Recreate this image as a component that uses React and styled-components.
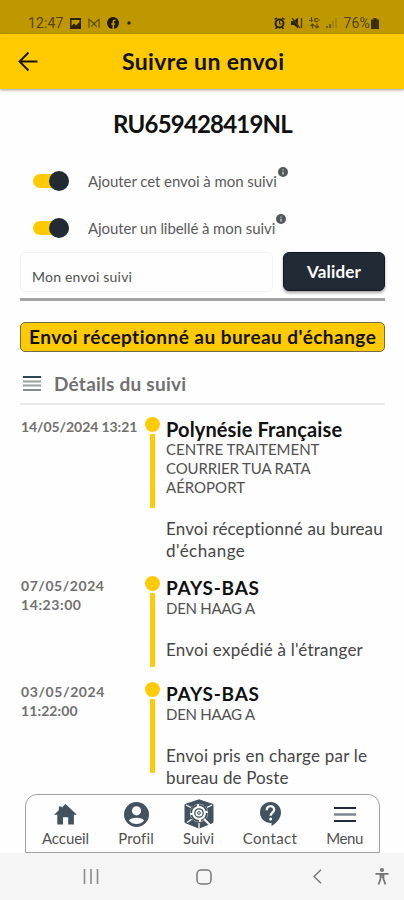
import React from 'react';
import styled, { createGlobalStyle } from 'styled-components';

const Global = createGlobalStyle`
  * { box-sizing: border-box; }
  body { margin: 0; background: #fefefe; font-family: Lato, "Open Sans", sans-serif; }
  svg { display: block; flex: none; }
`;

const Screen = styled.div`
  width: 404px;
  height: 900px;
  display: flex;
  flex-direction: column;
  overflow: hidden;
  background: #fefefe;
  color: #111;
`;

const Text = styled.span`
  white-space: nowrap;
  letter-spacing: ${(p) => p.$ls || 0}px;
`;

const StatusBar = styled.div`
  height: 34px;
  flex: none;
  padding: 12px 25px 0 28px;
  display: flex;
  justify-content: space-between;
  background: #bf9800;
  color: #54440a;
  font: 400 14px/22px Roboto, sans-serif;
`;

const StatusGroup = styled.div`
  display: flex;
  align-items: center;
  gap: ${(p) => p.$gap}px;
`;

const Header = styled.header`
  height: 55px;
  flex: none;
  display: grid;
  grid-template-columns: 122px 1fr;
  align-items: center;
  background: #ffcb00;
  box-shadow: 0 1px 3px rgba(0, 0, 0, 0.4);
  z-index: 1;
`;

const BackButton = styled.div`
  padding-left: 18px;
`;

const Title = styled.h1`
  margin: 0;
  padding-bottom: 2px;
  font-size: 23px;
  line-height: 30px;
  font-weight: 700;
`;

const Content = styled.main`
  height: 705px;
  flex: none;
  padding: 0 19px 0 20px;
`;

const TrackingNumber = styled.h2`
  margin: 21px 0 0;
  text-align: center;
  font-size: 24px;
  line-height: 28px;
  font-weight: 700;
`;

const Toggles = styled.div`
  padding-top: 19px;
  height: 114px;
`;

const ToggleRow = styled.div`
  height: 47px;
  display: flex;
  align-items: center;
  padding-left: 13px;
  color: #5a5a5a;
  font-size: 15px;
`;

const Switch = styled.div`
  width: 36px;
  height: 14px;
  margin-right: 19px;
  display: flex;
  align-items: center;
  justify-content: flex-end;
  background: #ffcb00;
  border-radius: 7px;
`;

const Knob = styled.div`
  width: 20px;
  height: 20px;
  flex: none;
  border-radius: 50%;
  background: #222a34;
`;

const Info = styled.div`
  align-self: flex-start;
  margin: 10px 0 0 1px;
`;

const Form = styled.div`
  display: flex;
  justify-content: space-between;
  height: 49px;
  border-bottom: 3px solid #a3a3a3;
`;

const Field = styled.div`
  width: 253px;
  height: 40px;
  padding: 9px 0 0 11px;
  border: 1px solid #f3f3f3;
  border-radius: 5px;
  display: flex;
  align-items: center;
  font-size: 14px;
  color: #505050;
`;

const Submit = styled.div`
  width: 102px;
  height: 39px;
  padding-bottom: 0;
  display: flex;
  align-items: center;
  justify-content: center;
  border-radius: 6px;
  border: 1px solid #111722;
  background: #222a35;
  box-shadow: 0 2px 3px rgba(0, 0, 0, 0.35);
  color: #fff;
  font-size: 17px;
  font-weight: 700;
`;

const Banner = styled.div`
  height: 30px;
  margin-top: 21px;
  display: flex;
  align-items: center;
  padding: 0 0 1px 8px;
  background: #ffcb00;
  border: 1px solid #756b48;
  border-radius: 5px;
  font-size: 19px;
  font-weight: 700;
`;

const DetailsHeading = styled.div`
  height: 53px;
  padding: 12px 0 0 3px;
  display: flex;
  align-items: center;
  gap: 13px;
  border-bottom: 2px solid #eaeaea;
  color: #707070;
  font-size: 19px;
  font-weight: 700;
`;

const Timeline = styled.div`
  padding-top: 12px;
`;

const Event = styled.article`
  height: ${(p) => p.$h}px;
  display: grid;
  grid-template-columns: 124px 22px 1fr;
`;

const EventDate = styled.div`
  display: flex;
  flex-direction: column;
  padding-left: 1px;
  font-size: 14px;
  line-height: 19px;
  font-weight: 700;
  color: #707070;
`;

const Marker = styled.div`
  width: 16px;
  display: flex;
  flex-direction: column;
  align-items: center;
  gap: 2px;
`;

const Dot = styled.div`
  width: 15px;
  height: 15px;
  border-radius: 50%;
  background: #ffcb05;
`;

const Bar = styled.div`
  width: 5px;
  height: 74px;
  border-radius: 1px;
  background: #ffcb05;
`;

const EventBody = styled.div`
  display: flex;
  flex-direction: column;
`;

const Place = styled.div`
  margin-top: 2px;
  font-size: ${(p) => p.$size}px;
  line-height: 20px;
  font-weight: 700;
`;

const Office = styled.div`
  display: flex;
  flex-direction: column;
  margin-top: 1px;
  font-size: 15px;
  line-height: 19px;
  color: #505050;
`;

const Message = styled.div`
  margin-top: 21px;
  display: flex;
  flex-direction: column;
  font-size: 17px;
  line-height: 21.5px;
  color: #454545;
`;

const Nav = styled.nav`
  width: 355px;
  height: 59px;
  margin-left: 25px;
  flex: none;
  display: grid;
  grid-template-columns: 79px 62px 63px 80px 1fr;
  border: 1px solid #a0a0a0;
  border-radius: 12px 12px 0 0;
  background: #fefefe;
`;

const NavItem = styled.div`
  display: flex;
  flex-direction: column;
  align-items: center;
  padding-top: 4px;
  font-size: 15px;
  line-height: 18px;
  color: #505050;
`;

const IconSlot = styled.div`
  height: 30px;
  display: flex;
  align-items: center;
`;

const SystemBar = styled.div`
  flex: 1;
  display: grid;
  grid-template-columns: 113px 117px 62px 1fr;
  align-items: center;
  padding: 0 0 0 83px;
  background: #f5f5f5;
`;

const SystemItem = styled.div`
  display: flex;
`;

const InfoIcon = () => (
  <svg width="10" height="10" viewBox="0 0 10 10">
    <circle cx="5" cy="5" r="5" fill="#50595c" />
    <path d="M5 2.6v1M5 4.7v2.7" stroke="#b9c0c2" strokeWidth="1.6" />
  </svg>
);

const icons = {
  home: (
    <svg width="23" height="21" viewBox="0 0 24 22" fill="#42525e">
      <path d="M12 0 24 11.2h-3.2V21.5h-6v-7.5H9.4v7.500h-6V11.2H0L5 6.5V2.5h3V3.8z" />
    </svg>
  ),
  profile: (
    <svg width="25" height="25" viewBox="0 0 25 25">
      <circle cx="12.5" cy="12.5" r="12.5" fill="#42525e" />
      <circle cx="12.5" cy="8.8" r="4.6" fill="#fefefe" />
      <path d="M5 18.5C6.8 14.8 18.2 14.8 20 18.5C16.5 23.2 8.5 23.2 5 18.5Z" fill="#fefefe" />
    </svg>
  ),
  tracking: (
    <svg width="30" height="30" viewBox="0 0 30 30" fill="none" stroke="#42525e">
      <path d="M15 0.8 29 5.5V23.5L15 29.2 1 23.500V5.5Z" fill="#42525e" />
      <path d="M2 6 8 9M28 6 22 9M3 23.5 8 20M15 24v6" stroke="#fefefe" strokeWidth="1.3" />
      <circle cx="15" cy="14" r="9.5" fill="#fefefe" />
      <circle cx="15" cy="14" r="7.800" strokeWidth="1.8" strokeDasharray="10 2.2" />
      <circle cx="15" cy="14" r="4.2" strokeWidth="1.3" />
      <circle cx="15" cy="14" r="1.4" strokeWidth="1" />
      <path d="M20 20 27 27" stroke="#fefefe" strokeWidth="2" />
    </svg>
  ),
  contact: (
    <svg width="21" height="24" viewBox="0 0 21 24">
      <path d="M10.5 0C16.5 0 21 4.5 21 10.5C21 16.5 16 21.5 11.5 24V21C5 21.2 0 16.5 0 10.5C0 4.5 4.5 0 10.5 0Z" fill="#42525e" />
      <path d="M6.8 8.2C6.8 3 14.2 3 14.2 7.6C14.2 10.6 10.6 10.7 10.6 13.8" fill="none" stroke="#fefefe" strokeWidth="2.3" />
      <circle cx="10.6" cy="17" r="1.5" fill="#fefefe" />
    </svg>
  ),
  menu: (
    <svg width="22" height="16" viewBox="0 0 22 16">
      <path d="M0 2h22M0 15h22" stroke="#22283f" strokeWidth="2" />
      <path d="M0 8.500h22" stroke="#7b8791" strokeWidth="2.5" />
    </svg>
  ),
};

const events = [
  {
    h: 159, size: 20,
    date: [['14/05/2024 13:21', -0.08]],
    place: ['Polynésie Française', 0.12],
    office: [['CENTRE TRAITEMENT', 0], ['COURRIER TUA RATA', -0.14], ['AÉROPORT', 0]],
    message: [['Envoi réceptionné au bureau', 0.15], ["d'échange", 0.5]],
  },
  {
    h: 106, size: 19,
    date: [['07/05/2024', 0.55], ['14:23:00', 0.58]],
    place: ['PAYS-BAS', 0.74],
    office: [['DEN HAAG A', -0.25]],
    message: [["Envoi expédié à l'étranger", 0.23]],
  },
  {
    h: 106, size: 19,
    date: [['03/05/2024', 0.6], ['11:22:00', 0.1]],
    place: ['PAYS-BAS', 0.74],
    office: [['DEN HAAG A', -0.25]],
    message: [['Envoi pris en charge par le', 0.23], ['bureau de Poste', 0.12]],
  },
];

const nav = [
  ['Accueil', 'home', -0.08],
  ['Profil', 'profile', 0.15],
  ['Suivi', 'tracking', -0.05],
  ['Contact', 'contact', 0.33],
  ['Menu', 'menu', -0.4],
];

const Lines = ({ items }) => items.map(([t, ls]) => <Text key={t} $ls={ls}>{t}</Text>);

export default function App() {
  return (
    <Screen>
      <Global />
      <StatusBar>
        <StatusGroup $gap={7}>
          <Text $ls={0.1}>12:47</Text>
          <svg width="11" height="11" viewBox="0 0 11 11">
            <path d="M0 0h11v11H0zM1.5 2v6L4 5.5 6 7.5 9.5 4V2z" fill="#2c2405" fillRule="evenodd" />
          </svg>
          <svg width="12" height="11" viewBox="0 0 13 11" fill="none" stroke="#5b4a0a" strokeWidth="1.2">
            <path d="M1 10V1l5.5 4.5L12 1v9M3.5 9 9.5 3M3.5 3l6 6" />
          </svg>
          <svg width="12" height="12" viewBox="0 0 12 12">
            <circle cx="6" cy="6" r="6" fill="#1d1804" />
            <path d="M6.3 12V5q0-2 2.2-1.7M4.2 7h4" stroke="#bf9800" strokeWidth="1.7" fill="none" />
          </svg>
          <svg width="11" height="4" viewBox="0 0 11 4"><circle cx="3" cy="2" r="1.7" fill="#2c2405" /></svg>
        </StatusGroup>
        <StatusGroup $gap={6}>
          <svg width="11" height="12" viewBox="0 0 11 12" fill="none" stroke="#2c2405">
            <circle cx="5.5" cy="6.5" r="4" strokeWidth="2" />
            <path d="M5.5 4v3h2" />
            <path d="M.5 2.5 3 .8M10.5 2.5 8 .8M1.5 12l1.5-2M9.5 12 8 10" strokeWidth="1.5" />
          </svg>
          <svg width="12" height="12" viewBox="0 0 12 12">
            <path d="M0 4h3l4-3.5v11L3 8H0z" fill="#2c2405" />
            <path d="M1 1 9 11M10.5 1v10" stroke="#4a3c08" strokeWidth="1.3" />
          </svg>
          <svg width="11" height="12" viewBox="0 0 11 12" fill="none" stroke="#5b4a0a" strokeWidth="1.2">
            <path d="M2.5 0v5M0 3.5h4M9 1.5H6v3h3M8.5 3h2.5M3.500 7v4.5M1.5 9l2-2 2 2M8 6.5V11M6 9l2 2 2-2" />
          </svg>
          <svg width="11" height="10" viewBox="0 0 11 10" strokeWidth="1.5">
            <path d="M1 10V8M4 10V6" stroke="#574709" />
            <path d="M7 10V3M10 10V0" stroke="#a08008" />
          </svg>
          <StatusGroup $gap={1}>
            <Text $ls={0.2}>76%</Text>
            <svg width="8" height="11" viewBox="0 0 8 11">
              <path d="M2.5 0h3v1.5H8V11H0V1.5h2.5z" fill="#3a300a" />
            </svg>
          </StatusGroup>
        </StatusGroup>
      </StatusBar>

      <Header>
        <BackButton>
          <svg width="20" height="20" viewBox="0 0 20 20" fill="none" stroke="#1a1704" strokeWidth="2">
            <path d="M19.500 9.500H2M10.5 .5 1.6 9.5l8.9 9" />
          </svg>
        </BackButton>
        <Title><Text $ls={0.37}>Suivre un envoi</Text></Title>
      </Header>

      <Content>
        <TrackingNumber><Text $ls={-0.8}>RU659428419NL</Text></TrackingNumber>
        <Toggles>
          <ToggleRow>
            <Switch><Knob /></Switch>
            <Text $ls={-0.07}>Ajouter cet envoi à mon suivi</Text>
            <Info><InfoIcon /></Info>
          </ToggleRow>
          <ToggleRow>
            <Switch><Knob /></Switch>
            <Text $ls={-0.09}>Ajouter un libellé à mon suivi</Text>
            <Info><InfoIcon /></Info>
          </ToggleRow>
        </Toggles>
        <Form>
          <Field><Text $ls={0.22}>Mon envoi suivi</Text></Field>
          <Submit><Text $ls={0.2}>Valider</Text></Submit>
        </Form>
        <Banner><Text $ls={0.46}>Envoi réceptionné au bureau d'échange</Text></Banner>
        <DetailsHeading>
          <svg width="18" height="15" viewBox="0 0 18 15">
            <path d="M0 1h18" stroke="#2c4652" strokeWidth="2" />
            <path d="M0 5.5h18M0 9.5h18" stroke="#98a0a4" strokeWidth="2" />
            <path d="M0 14h18" stroke="#59646b" strokeWidth="1.5" />
          </svg>
          <Text $ls={0.24}>Détails du suivi</Text>
        </DetailsHeading>
        <Timeline>
          {events.map((e) => (
            <Event key={e.date[0][0]} $h={e.h}>
              <EventDate><Lines items={e.date} /></EventDate>
              <Marker><Dot /><Bar /></Marker>
              <EventBody>
                <Place $size={e.size}><Text $ls={e.place[1]}>{e.place[0]}</Text></Place>
                <Office><Lines items={e.office} /></Office>
                <Message><Lines items={e.message} /></Message>
              </EventBody>
            </Event>
          ))}
        </Timeline>
      </Content>

      <Nav>
        {nav.map(([label, icon, ls]) => (
          <NavItem key={label}>
            <IconSlot>{icons[icon]}</IconSlot>
            <Text $ls={ls}>{label}</Text>
          </NavItem>
        ))}
      </Nav>
      <SystemBar>
        <SystemItem>
          <svg width="16" height="15" viewBox="0 0 16 15" stroke="#8a8a8a" strokeWidth="1.6">
            <path d="M1.5 0v15M8 0v15M14.5 0v15" />
          </svg>
        </SystemItem>
        <SystemItem>
          <svg width="16" height="16" viewBox="0 0 16 16">
            <rect x="1" y="1" width="14" height="14" rx="4" fill="none" stroke="#777" strokeWidth="1.5" />
          </svg>
        </SystemItem>
        <SystemItem>
          <svg width="9" height="15" viewBox="0 0 9 15" fill="none" stroke="#777" strokeWidth="1.5">
            <path d="M8 .7 1 7.5 8 14.3" />
          </svg>
        </SystemItem>
        <SystemItem>
          <svg width="14" height="17" viewBox="0 0 14 17" fill="none" stroke="#737373" strokeWidth="1.7">
            <circle cx="7" cy="2" r="2" fill="#737373" stroke="none" />
            <path d="M.5 5.8H13.5M5.5 6v5L3.5 16.500M8.5 6v5l2 5.5M5.5 7h3M5.500 9h3" />
          </svg>
        </SystemItem>
      </SystemBar>
    </Screen>
  );
}
